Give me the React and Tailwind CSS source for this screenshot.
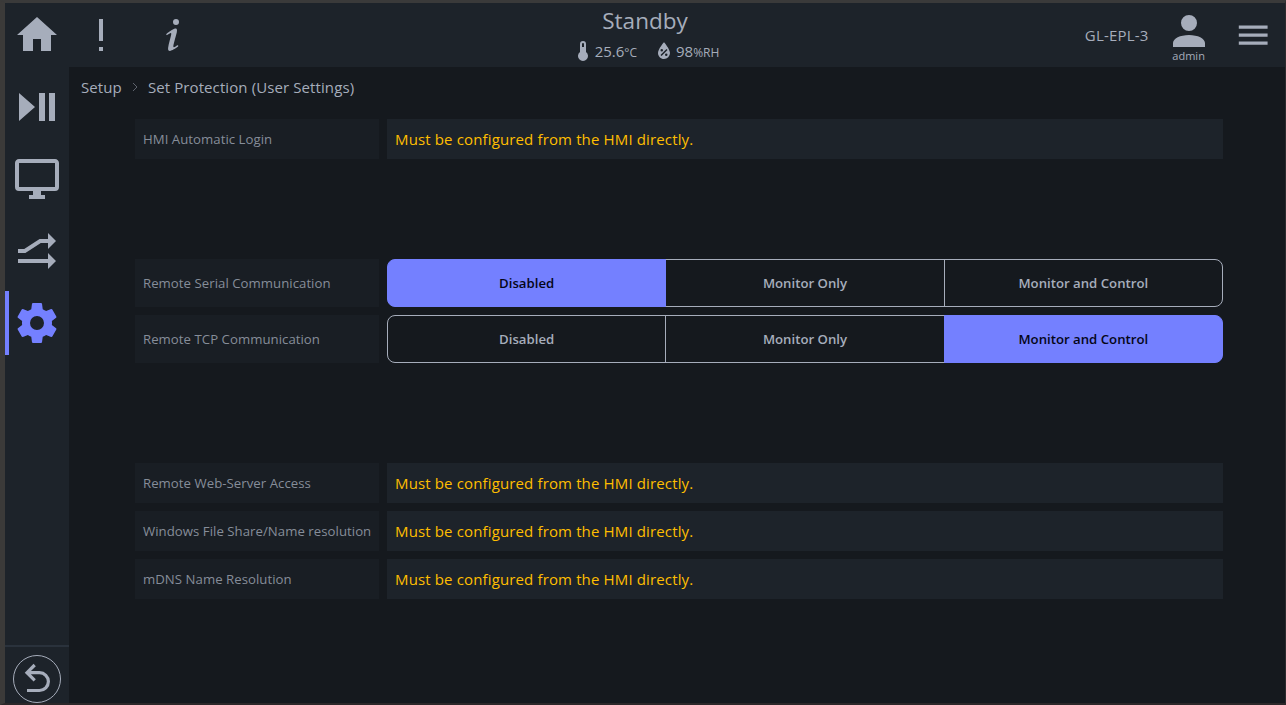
import { useState } from "react";
import clsx from "clsx";

const ICONS = {
  home: "M10 20v-6h4v6h5v-8h3L12 3 2 12h3v8z",
  alert: "M11 4H13V15H11V4M13 18V20H11V18H13Z",
  info: "M13.5,4A1.5,1.5 0 0,0 12,5.5A1.5,1.5 0 0,0 13.5,7A1.5,1.5 0 0,0 15,5.5A1.5,1.5 0 0,0 13.5,4M13.14,8.77C11.95,8.87 8.7,11.46 8.7,11.46C8.5,11.61 8.56,11.6 8.72,11.88C8.88,12.15 8.86,12.17 9.05,12.04C9.25,11.91 9.58,11.7 10.13,11.36C12.25,10 10.47,13.14 9.56,18.43C9.2,21.05 11.56,19.7 12.17,19.3C12.77,18.91 14.38,17.8 14.54,17.69C14.76,17.54 14.6,17.42 14.43,17.17C14.31,17 14.19,17.12 14.19,17.12C13.54,17.55 12.35,18.45 12.19,17.88C12,17.31 13.22,13.4 13.89,10.71C14,10.07 14.3,8.67 13.14,8.77Z",
  playPause: "M3,5V19L11,12M13,19H16V5H13M18,5V19H21V5",
  monitor: "M21,16H3V4H21M21,2H3C1.89,2 1,2.89 1,4V16A2,2 0 0,0 3,18H10V20H8V22H16V20H14V18H21A2,2 0 0,0 23,16V4C23,2.89 22.1,2 21,2Z",
  routes: "M2.5 11h3.1l7.7-5h4.2V3l4 4-4 4V8h-3.6l-7.7 5H2.5zM2.5 16h15v-3l4 4-4 4v-3h-15z",
  cog: "M12,15.5A3.5,3.5 0 0,1 8.5,12A3.5,3.5 0 0,1 12,8.5A3.5,3.5 0 0,1 15.5,12A3.5,3.5 0 0,1 12,15.5M19.43,12.97C19.47,12.65 19.5,12.33 19.5,12C19.5,11.67 19.47,11.34 19.43,11L21.54,9.37C21.73,9.22 21.78,8.95 21.66,8.73L19.66,5.27C19.54,5.05 19.27,4.96 19.05,5.05L16.56,6.05C16.04,5.66 15.5,5.32 14.87,5.07L14.5,2.42C14.46,2.18 14.25,2 14,2H10C9.75,2 9.54,2.18 9.5,2.42L9.13,5.07C8.5,5.32 7.96,5.66 7.44,6.05L4.95,5.05C4.73,4.96 4.46,5.05 4.34,5.27L2.34,8.73C2.21,8.95 2.27,9.22 2.46,9.37L4.57,11C4.53,11.34 4.5,11.67 4.5,12C4.5,12.33 4.53,12.65 4.57,12.97L2.46,14.63C2.27,14.78 2.21,15.05 2.34,15.27L4.34,18.73C4.46,18.95 4.73,19.03 4.95,18.95L7.44,17.94C7.96,18.34 8.5,18.68 9.13,18.93L9.5,21.58C9.54,21.82 9.75,22 10,22H14C14.25,22 14.46,21.82 14.5,21.58L14.87,18.93C15.5,18.67 16.04,18.34 16.56,17.94L19.05,18.95C19.27,19.03 19.54,18.95 19.66,18.73L21.66,15.27C21.78,15.05 21.73,14.78 21.54,14.63L19.43,12.97Z",
  thermometer: "M15 13V5A3 3 0 0 0 9 5V13A5 5 0 1 0 15 13M12 4A1 1 0 0 1 13 5V8H11V5A1 1 0 0 1 12 4Z",
  humidity: "M12,3.25C12,3.25 6,10 6,14C6,17.32 8.69,20 12,20A6,6 0 0,0 18,14C18,10 12,3.25 12,3.25M14.47,9.97L15.53,11.03L9.53,17.03L8.47,15.97M9.75,10A1.25,1.25 0 0,1 11,11.25A1.25,1.25 0 0,1 9.75,12.5A1.25,1.25 0 0,1 8.5,11.25A1.25,1.25 0 0,1 9.75,10M14.25,14.5A1.25,1.25 0 0,1 15.5,15.75A1.25,1.25 0 0,1 14.25,17A1.25,1.25 0 0,1 13,15.75A1.25,1.25 0 0,1 14.25,14.5Z",
  account: "M12,4A4,4 0 0,1 16,8A4,4 0 0,1 12,12A4,4 0 0,1 8,8A4,4 0 0,1 12,4M12,14C16.42,14 20,15.79 20,18V20H4V18C4,15.79 7.58,14 12,14Z",
  menu: "M3,6H21V8H3V6M3,11H21V13H3V11M3,16H21V18H3V16Z",
};

const MODES = ["Disabled", "Monitor Only", "Monitor and Control"];

function Icon({ name, className = "size-12" }) {
  return (
    <svg viewBox="0 0 24 24" fill="currentColor" fillRule="evenodd" className={clsx("shrink-0", className)}>
      <path d={ICONS[name]} />
    </svg>
  );
}

function TopBar() {
  return (
    <header className="flex h-16 shrink-0 items-center bg-[#1d232a]">
      <div className="flex w-[500px] items-center gap-6 pl-2">
        <Icon name="home" />
        <div className="-ml-2 flex gap-6">
          <Icon name="alert" />
          <Icon name="info" />
        </div>
      </div>
      <div className="flex flex-1 flex-col items-center">
        <h1 className="text-[22.5px] leading-8">Standby</h1>
        <div className="flex items-center text-[15px] leading-7">
          <Icon name="thermometer" className="size-6" />
          <span>
            25.6<span className="text-xs">°C</span>
          </span>
          <Icon name="humidity" className="ml-[15px] size-6" />
          <span>
            98<span className="text-xs">%RH</span>
          </span>
        </div>
      </div>
      <div className="flex w-[500px] items-center justify-end pr-[13px]">
        <span className="text-[15px] tracking-[0.2px]">GL-EPL-3</span>
        <button className="ml-4 flex h-16 w-12 flex-col items-center pt-1">
          <Icon name="account" />
          <span className="-mt-[7px] text-[11px] leading-4">admin</span>
        </button>
        <button className="ml-[21px]">
          <Icon name="menu" className="size-[38.4px]" />
        </button>
      </div>
    </header>
  );
}

function SideBar() {
  return (
    <nav className="flex w-16 shrink-0 flex-col bg-[#1d232a]">
      <div className="flex flex-1 flex-col gap-2 pt-2">
        {["playPause", "monitor", "routes", "cog"].map((name) => (
          <button
            key={name}
            className={clsx(
              "flex h-16 items-center border-l-4 pl-1",
              name === "cog" ? "border-[#7480ff] text-[#7480ff]" : "border-transparent",
            )}
          >
            <Icon name={name} />
          </button>
        ))}
      </div>
      <div className="flex h-[58px] justify-center border-t-2 border-[#2a323c] pt-2">
        <button className="size-12 rounded-full border border-[#a6adbb]">
          <svg viewBox="1 1 46 46" fill="none" stroke="currentColor" strokeWidth="3.2">
            <path d="M14 17.7h12.5a8.9 8.9 0 0 1 0 17.8H14M21.7 10l-7.7 7.7 7.7 7.7" />
          </svg>
        </button>
      </div>
    </nav>
  );
}

function Row({ label, children }) {
  return (
    <div className="flex gap-2">
      <div className="flex w-[244px] shrink-0 items-center bg-[#191e24] px-2 pt-px text-[13.2px] tracking-[0.04px] whitespace-nowrap text-[#868d99]">
        {label}
      </div>
      {children}
    </div>
  );
}

function LockedRow({ label }) {
  return (
    <Row label={label}>
      <div className="flex h-10 flex-1 items-center bg-[#1d232a] px-2 text-[15px] tracking-[0.14px] text-[#ffbe00]">
        Must be configured from the HMI directly.
      </div>
    </Row>
  );
}

function ModeRow({ label, initial }) {
  const [mode, setMode] = useState(initial);
  return (
    <Row label={label}>
      <div className="flex h-12 flex-1">
        {MODES.map((m) => (
          <button
            key={m}
            onClick={() => setMode(m)}
            className={clsx(
              "-ml-px flex-1 border pt-px text-[13.2px] font-semibold first:ml-0 first:basis-px first:rounded-l-lg last:rounded-r-lg",
              m === mode ? "z-10 border-[#7480ff] bg-[#7480ff] text-[#050617]" : "border-[#a6adbb]",
            )}
          >
            {m}
          </button>
        ))}
      </div>
    </Row>
  );
}

export default function App() {
  return (
    <div className="flex h-[705px] w-[1286px] flex-col border-t-3 border-r border-b-2 border-l-5 border-t-[#3a3a3a] border-r-[#2d2b2e] border-b-[#2b2729] border-l-[#3b3a39] bg-[#15191e] font-['Open_Sans',sans-serif] text-[#a6adbb]">
      <TopBar />
      <div className="flex min-h-0 flex-1">
        <SideBar />
        <main className="flex-1">
          <div className="flex h-10 items-center pl-3 text-[15px] tracking-[0.1px]">
            <span>Setup</span>
            <svg viewBox="0 0 6 10" fill="none" stroke="currentColor" className="mr-[10px] ml-[10px] h-[10px] w-1.5 opacity-50">
              <path d="M1 1l4 4-4 4" />
            </svg>
            <span>Set Protection (User Settings)</span>
          </div>
          <div className="flex flex-col pt-3 pr-[62px] pl-[66px]">
            <LockedRow label="HMI Automatic Login" />
            <div className="flex flex-col gap-2 py-[100px]">
              <ModeRow label="Remote Serial Communication" initial="Disabled" />
              <ModeRow label="Remote TCP Communication" initial="Monitor and Control" />
            </div>
            <div className="flex flex-col gap-2">
              <LockedRow label="Remote Web-Server Access" />
              <LockedRow label="Windows File Share/Name resolution" />
              <LockedRow label="mDNS Name Resolution" />
            </div>
          </div>
        </main>
      </div>
    </div>
  );
}
